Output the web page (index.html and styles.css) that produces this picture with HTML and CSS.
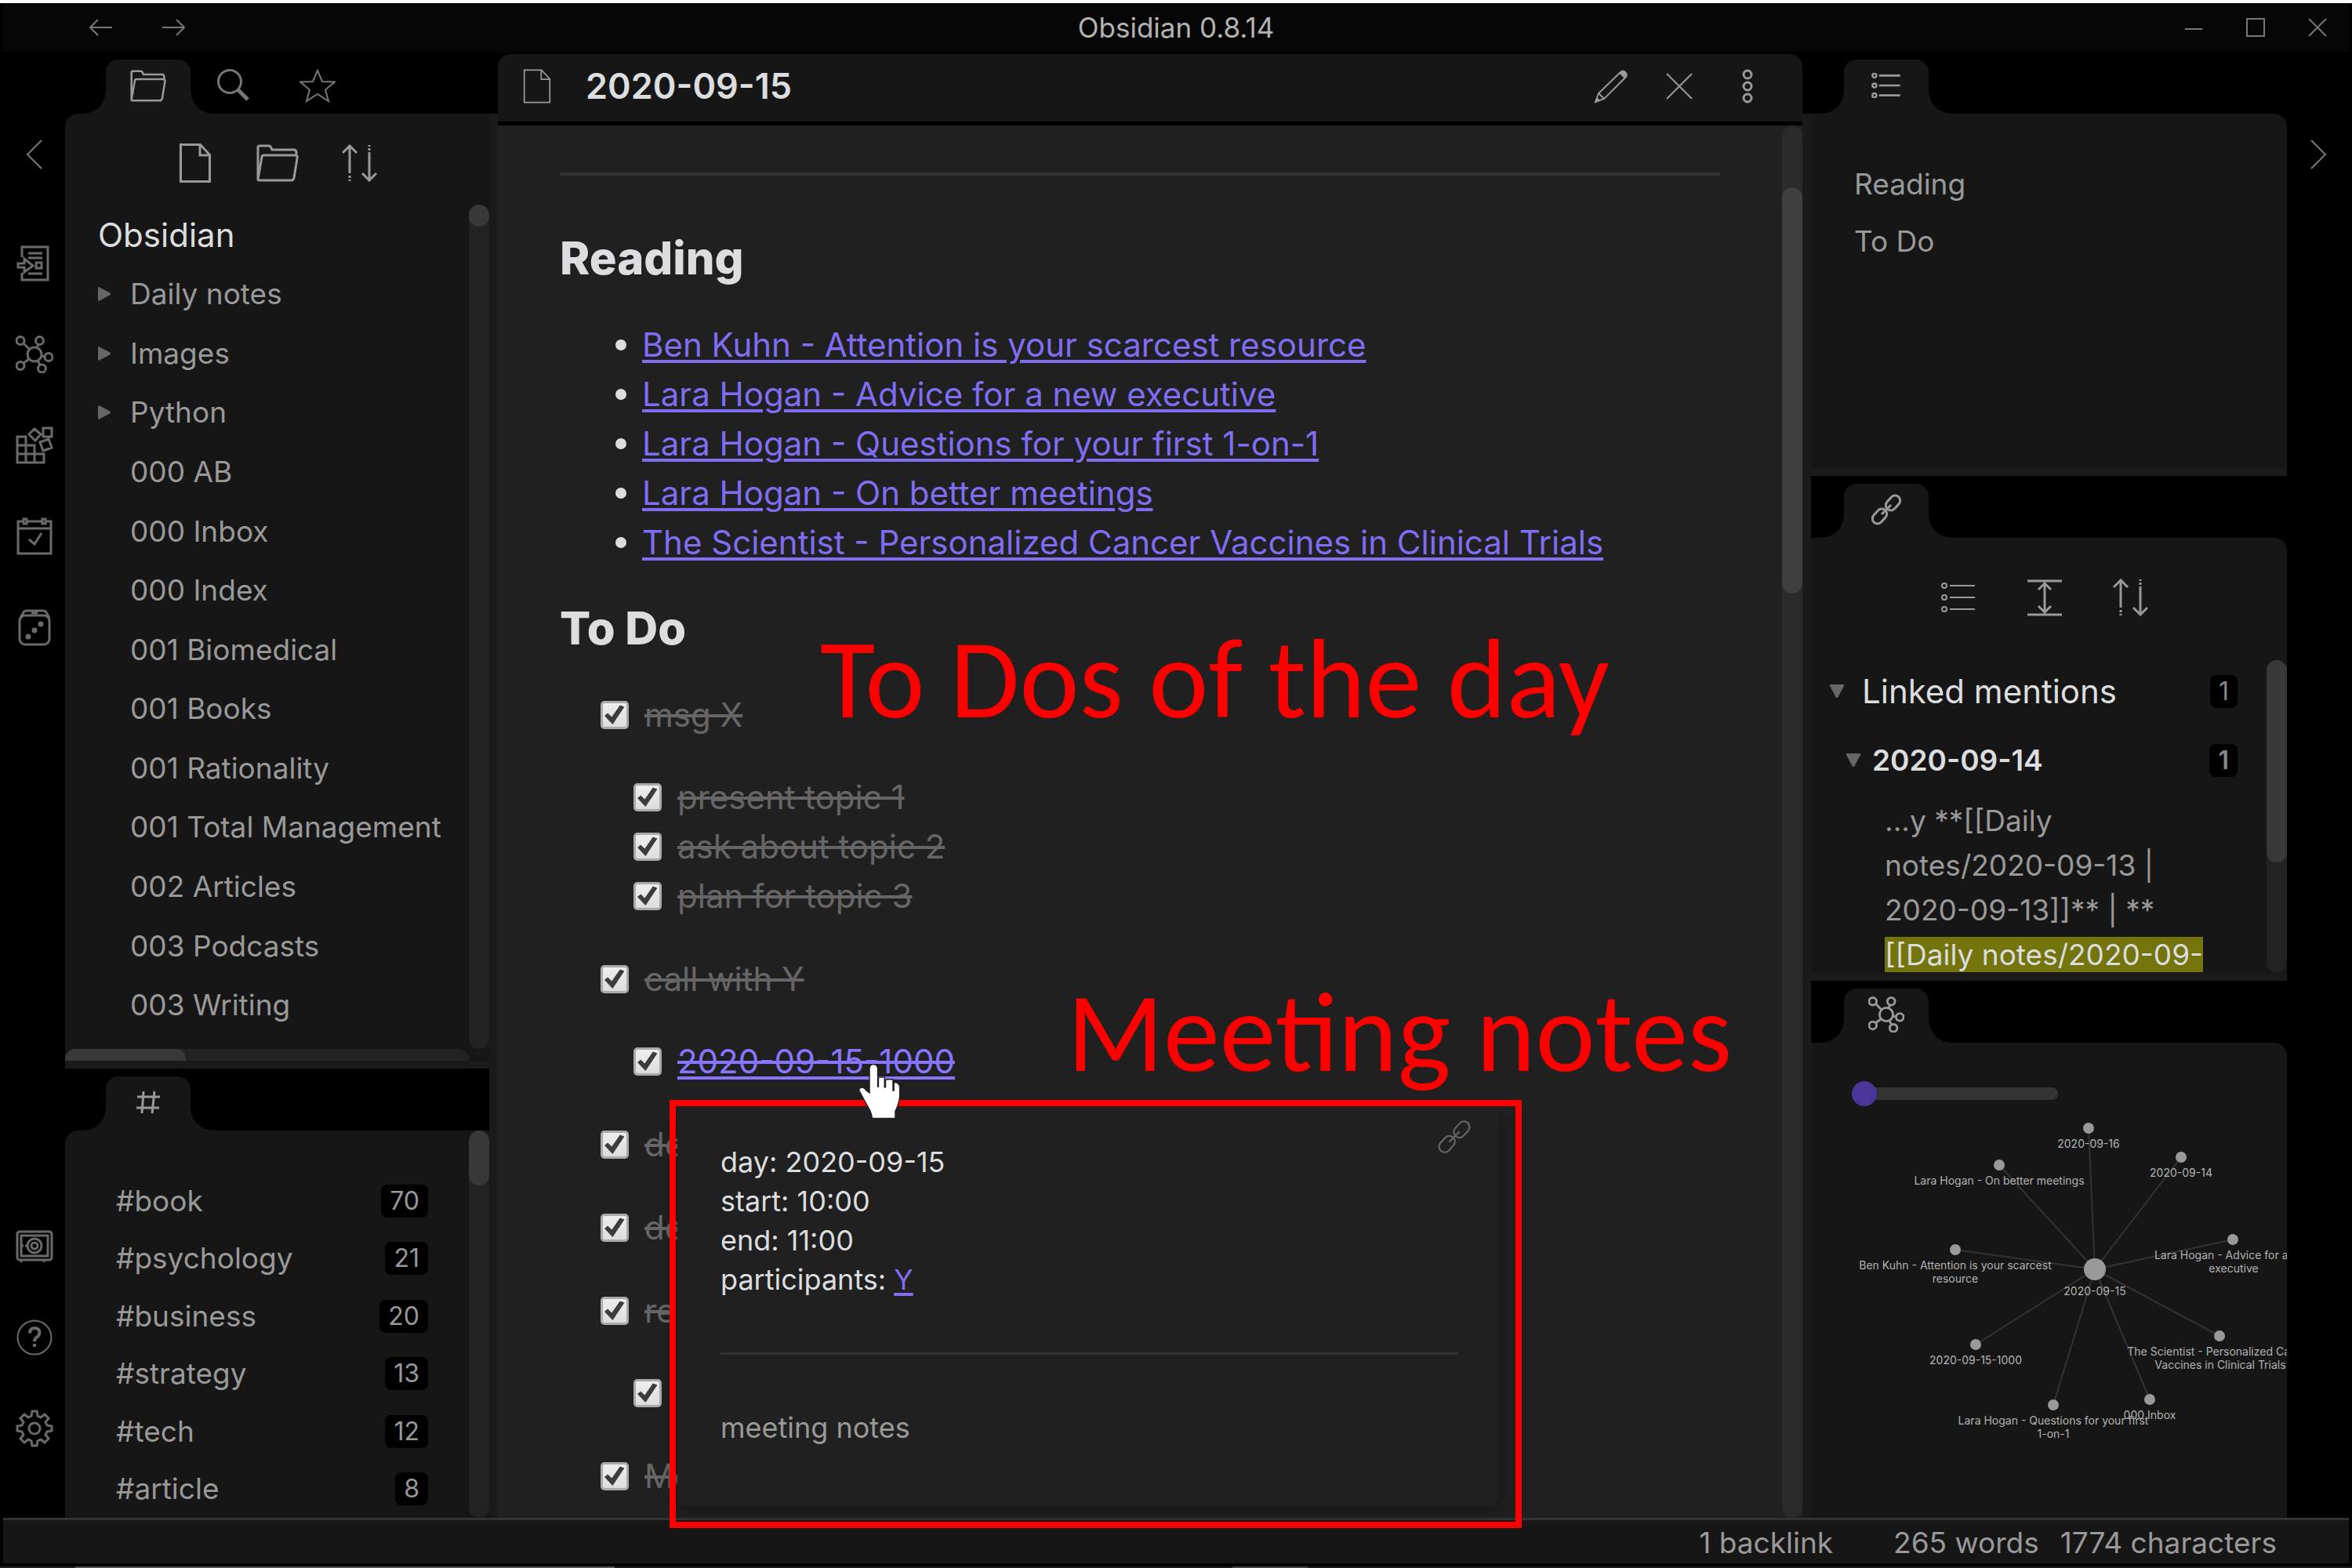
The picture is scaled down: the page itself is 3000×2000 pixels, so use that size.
FILE: index.html
```html
<!DOCTYPE html>
<html lang="en">
<head>
<meta charset="utf-8">
<title>Obsidian 0.8.14</title>
<link rel="stylesheet" href="styles.css">
</head>
<body>
<svg class="sprite" aria-hidden="true">
  <symbol id="i-folder" viewBox="0 0 54 48"><path d="M2 45V4q0-2 2-2h12q2 0 3 3l1 2h28q3 0 3 4v3M2 45l5-29q0-2 3-2h39q4 0 3 4l-4 25q-1 3-3 3H4q-2 0-2-1z"/></symbol>
  <symbol id="i-file" viewBox="0 0 40 50"><path d="M1.500 1.500h25l12 13v34h-37zM26 2v13h12"/></symbol>
  <symbol id="i-sort" viewBox="0 0 46 48"><path d="M10 2v35M1 11l9-9 9 9M35 10v36M26 37l9 9 9-9M10 40v3M10 45v2M35 1v2M35 5v3"/></symbol>
  <symbol id="i-list" viewBox="0 0 44 38"><circle cx="4" cy="4" r="3"/><circle cx="4" cy="19" r="3"/><circle cx="4" cy="34" r="3"/><path d="M11 4h32M11 19h32M11 34h32"/></symbol>
  <symbol id="i-graph" viewBox="0 0 48 48"><circle cx="24" cy="24" r="9"/><circle cx="6" cy="6.500" r="5"/><circle cx="30.500" cy="6.500" r="5"/><circle cx="42" cy="27.500" r="5"/><circle cx="33.500" cy="42" r="5"/><circle cx="6" cy="38.500" r="5"/><path d="M10 10l7.500 7.500M28.800 11.500L27 15.500M33 26l4 .7M28 32l3 5.500M10 35l7-5"/></symbol>
  <symbol id="i-link" viewBox="0 0 40 40"><rect x="-6.500" y="-10.500" width="13" height="21" rx="6.500" transform="translate(28.500 11.500) rotate(42)"/><rect x="-6.500" y="-10.500" width="13" height="21" rx="6.500" transform="translate(11.500 28.500) rotate(42)"/><path d="M14 26l12-12"/></symbol>
  <symbol id="i-tri" viewBox="0 0 18 20"><path d="M0 2q0-2 2-1l14 7.500q2 1.500 0 3L2 19q-2 1-2-1z"/></symbol>
</svg>

<div class="window">
  <header class="titlebar">
    <nav class="history">
      <button aria-label="Back"><svg class="s2" width="30" height="22" viewBox="0 0 30 22"><path d="M29 11H2M11 1L1 11l10 10"/></svg></button>
      <button aria-label="Forward"><svg class="s2" width="30" height="22" viewBox="0 0 30 22"><path d="M1 11h27M19 1l10 10-10 10"/></svg></button>
    </nav>
    <h1 class="app-title">Obsidian 0.8.14</h1>
    <div class="win-controls">
      <button aria-label="Minimize"><svg class="s2" width="24" height="24" viewBox="0 0 24 24"><path d="M1 14h22"/></svg></button>
      <button aria-label="Maximize"><svg class="s2" width="24" height="24" viewBox="0 0 24 24"><path d="M1 1h22v22H1z"/></svg></button>
      <button aria-label="Close"><svg class="s2" width="24" height="24" viewBox="0 0 24 24"><path d="M1 1l22 22M23 1L1 23"/></svg></button>
    </div>
  </header>

  <div class="workspace">
    <nav class="ribbon">
      <button class="collapse" aria-label="Collapse left"><svg class="s2" width="22" height="38" viewBox="0 0 22 38"><path d="M20 1L2 19l18 18"/></svg></button>
      <button aria-label="Open quick switcher"><svg class="s3" width="48" height="48" viewBox="0 0 48 48"><path d="M8 16V3h33v42H8V36M16 11h18M16 17h18M16 37h18M26 23h7v7h-7zM3 24h8v-6l11 9-11 8v-6H3z"/></svg></button>
      <button aria-label="Open graph view"><svg class="s3" width="48" height="48"><use href="#i-graph"/></svg></button>
      <button aria-label="Templates"><svg class="s3" width="48" height="48" viewBox="0 0 48 48"><path d="M2 13h11v33H2zM2 24h22v22M2 35h34v11H2M13 24v22M24 35v11M35 2h11v11H35zM24 3l8 7-7 8-8-8zM31 20l11-4 4 11-11 4z"/></svg></button>
      <button aria-label="Daily note"><svg class="s3" width="48" height="48" viewBox="0 0 48 48"><path d="M9 5H3v41h42V5h-6M15 5h18M3 14h42M10 2h4v6h-4zM34 2h4v6h-4zM17 28l7 6 9-14"/></svg></button>
      <button aria-label="Random note"><svg class="s3" width="48" height="48" viewBox="0 0 48 48"><rect x="5" y="9" width="38" height="37" rx="7"/><path d="M6 12l4-7q1-2 4-2h21q3 0 4 2l4 7M20 6h8"/><g class="solid"><circle cx="16" cy="36" r="3.500"/><circle cx="24" cy="28" r="3.500"/><circle cx="32" cy="20" r="3.500"/></g></svg></button>
      <span class="spacer"></span>
      <button aria-label="Open another vault"><svg class="s3" width="48" height="48" viewBox="0 0 48 48"><rect x="2" y="5" width="44" height="36" rx="3"/><path d="M7 10h34v26H7zM7 23h3M12 23h3M7 42v2M36 42v2"/><circle cx="24" cy="23" r="9"/><circle cx="24" cy="23" r="4"/></svg></button>
      <button aria-label="Help"><svg class="s2" width="48" height="48" viewBox="0 0 48 48"><circle cx="24" cy="24" r="21.500"/><path class="heavy" d="M18 18.500q0-6.500 6.200-6.500t6.200 6q0 3-3.200 5.300T24 29M24 32v4"/></svg></button>
      <button aria-label="Settings"><svg class="s3" width="48" height="48" viewBox="0 0 48 48"><circle cx="24" cy="24" r="7"/><path d="M21 2h6l1 6 4 2 5-4 5 5-4 5 2 4 6 1v6l-6 1-2 4 4 5-5 5-5-4-4 2-1 6h-6l-1-6-4-2-5 4-5-5 4-5-2-4-6-1v-6l6-1 2-4-4-5 5-5 5 4 4-2z"/></svg></button>
    </nav>

    <aside class="sidebar left">
      <section class="pane">
        <div class="tabs">
          <button class="tab active" aria-label="Files"><svg class="s3" width="46" height="41"><use href="#i-folder"/></svg></button>
          <button class="tab" aria-label="Search"><svg class="s3" width="42" height="42" viewBox="0 0 42 42"><circle cx="17" cy="16" r="14.500"/><path class="thick" d="M27 26l13 13"/></svg></button>
          <button class="tab" aria-label="Starred"><svg class="s2" width="46" height="44" viewBox="0 0 46 44"><path d="M23 3l6 14 16 .5-12 10L37 42l-14-9-14 9 4-14.500-12-10 16-.5z"/></svg></button>
        </div>
        <div class="panel rounded-left files">
          <div class="toolbar files-bar">
            <button aria-label="New note"><svg class="s3" width="40" height="50"><use href="#i-file"/></svg></button>
            <button aria-label="New folder"><svg class="s3" width="54" height="48"><use href="#i-folder"/></svg></button>
            <button aria-label="Change sort order"><svg class="s3" width="46" height="48"><use href="#i-sort"/></svg></button>
          </div>
          <div class="scroll-row">
            <ul class="tree">
              <li class="root">Obsidian</li>
              <li><svg class="tri" width="17" height="20"><use href="#i-tri"/></svg>Daily notes</li>
              <li><svg class="tri" width="17" height="20"><use href="#i-tri"/></svg>Images</li>
              <li><svg class="tri" width="17" height="20"><use href="#i-tri"/></svg>Python</li>
              <li class="leaf">000 AB</li>
              <li class="leaf">000 Inbox</li>
              <li class="leaf">000 Index</li>
              <li class="leaf">001 Biomedical</li>
              <li class="leaf">001 Books</li>
              <li class="leaf">001 Rationality</li>
              <li class="leaf">001 Total Management</li>
              <li class="leaf">002 Articles</li>
              <li class="leaf">003 Podcasts</li>
              <li class="leaf">003 Writing</li>
            </ul>
            <div class="vbar"><div class="thumb files-thumb"></div></div>
          </div>
          <div class="hbar"><div class="hthumb"></div></div>
        </div>
      </section>
      <div class="divider"></div>
      <section class="pane">
        <div class="tabs">
          <button class="tab active" aria-label="Tags"><svg class="s3" width="32" height="30" viewBox="0 0 32 30"><path d="M2 8h29M1 22h29M10 1L8 29M24 1l-3 28"/></svg></button>
        </div>
        <div class="panel rounded-left scroll-row">
          <ul class="tags">
            <li>#book<span class="badge">70</span></li>
            <li>#psychology<span class="badge">21</span></li>
            <li>#business<span class="badge">20</span></li>
            <li>#strategy<span class="badge">13</span></li>
            <li>#tech<span class="badge">12</span></li>
            <li>#article<span class="badge">8</span></li>
          </ul>
          <div class="vbar"><div class="thumb tags-thumb"></div></div>
        </div>
      </section>
    </aside>

    <div class="handle"></div>

    <main class="note">
      <header class="note-header">
        <svg class="s2 doc" width="36" height="44"><use href="#i-file"/></svg>
        <h2 class="note-title">2020-09-15</h2>
        <button aria-label="Edit"><svg class="s2" width="44" height="44" viewBox="0 0 44 44"><path d="M2 42l4-11L34 4q3-3 6 0t1 6L13 38zM6 31l7 7"/><path class="solid" d="M2 42l2-6 4 4zM34 4q3-3 6 0t1 6l-2 2-7-7z"/></svg></button>
        <button aria-label="Close pane"><svg class="s2" width="34" height="34" viewBox="0 0 34 34"><path d="M1 1l32 32M33 1L1 33"/></svg></button>
        <button aria-label="More options"><svg class="s3" width="16" height="44" viewBox="0 0 16 44"><circle cx="8" cy="7" r="5"/><circle cx="8" cy="22" r="5"/><circle cx="8" cy="37" r="5"/></svg></button>
      </header>
      <div class="scroll-row note-body">
        <article class="preview">
          <hr>
          <h3>Reading</h3>
          <ul class="links">
            <li><a href="#ben-kuhn">Ben Kuhn - Attention is your scarcest resource</a></li>
            <li><a href="#advice">Lara Hogan - Advice for a new executive</a></li>
            <li><a href="#questions">Lara Hogan - Questions for your first 1-on-1</a></li>
            <li><a href="#meetings">Lara Hogan - On better meetings</a></li>
            <li><a href="#scientist">The Scientist - Personalized Cancer Vaccines in Clinical Trials</a></li>
          </ul>
          <h3>To Do</h3>
          <ul class="todo">
            <li><label><input type="checkbox" checked><s>msg X</s></label>
              <ul>
                <li><label><input type="checkbox" checked><s>present topic 1</s></label></li>
                <li><label><input type="checkbox" checked><s>ask about topic 2</s></label></li>
                <li><label><input type="checkbox" checked><s>plan for topic 3</s></label></li>
              </ul>
            </li>
            <li><label><input type="checkbox" checked><s>call with Y</s></label>
              <ul>
                <li><label><input type="checkbox" checked><s class="hot"><a href="#2020-09-15-1000">2020-09-15-1000</a></s></label></li>
              </ul>
            </li>
            <li><label><input type="checkbox" checked><s>de</s></label></li>
            <li><label><input type="checkbox" checked><s>de</s></label></li>
            <li><label><input type="checkbox" checked><s>re</s></label>
              <ul>
                <li><label><input type="checkbox" checked aria-label="Subtask"></label></li>
              </ul>
            </li>
            <li><label><input type="checkbox" checked><s>Me</s></label></li>
          </ul>
        </article>
        <div class="vbar wide"><div class="thumb note-thumb"></div></div>
      </div>

      <div class="popover">
        <svg class="s2 pop-link" width="44" height="44"><use href="#i-link"/></svg>
        <p>day: 2020-09-15<br>start: 10:00<br>end: 11:00<br>participants: <a href="#y">Y</a></p>
        <hr>
        <p class="muted">meeting notes</p>
      </div>
      <div class="frame"></div>
      <p class="callout first">To Dos of the day</p>
      <p class="callout second">Meeting notes</p>
      <svg class="cursor" width="57" height="72" viewBox="100 45 170 215"><path d="M150 165V70q0-15 13-15q13 0 14 15V140H184V108q0-4 4-4H203V142h8V115q0-3 4-3H235V155h8V125q0-3 6-1q10 3 12 14V175q-3 30-17 55V256H160Q157 240 152 228Q130 190 112 155Q108 147 114 144Q125 140 135 155Z"/></svg>
    </main>

    <div class="handle"></div>

    <aside class="sidebar right">
      <section class="pane">
        <div class="tabs">
          <button class="tab active" aria-label="Outline"><svg class="s3" width="38" height="32"><use href="#i-list"/></svg></button>
        </div>
        <div class="panel rounded-right">
          <ul class="outline">
            <li>Reading</li>
            <li>To Do</li>
          </ul>
        </div>
      </section>
      <div class="divider"></div>
      <section class="pane">
        <div class="tabs">
          <button class="tab active" aria-label="Backlinks"><svg class="s3" width="40" height="40"><use href="#i-link"/></svg></button>
        </div>
        <div class="panel rounded-right backlinks">
          <div class="toolbar back-bar">
            <button aria-label="Collapse results"><svg class="s2" width="44" height="38"><use href="#i-list"/></svg></button>
            <button aria-label="Show more context"><svg class="s3" width="46" height="48" viewBox="0 0 46 48"><path d="M1 3h44M1 46h44M23 6v37M15 14l8-8 8 8M15 35l8 8 8-8"/></svg></button>
            <button aria-label="Change sort order"><svg class="s3" width="46" height="48"><use href="#i-sort"/></svg></button>
          </div>
          <div class="scroll-row">
            <div class="results">
              <div class="result-head"><svg class="tri down" width="18" height="20"><use href="#i-tri"/></svg>Linked mentions<span class="badge">1</span></div>
              <div class="result-file"><svg class="tri down" width="18" height="20"><use href="#i-tri"/></svg>2020-09-14<span class="badge">1</span></div>
              <p class="match">...y **[[Daily<br>notes/2020-09-13 |<br>2020-09-13]]** | **<br><mark>[[Daily notes/2020-09-</mark></p>
            </div>
            <div class="vbar"><div class="thumb back-thumb"></div></div>
          </div>
        </div>
      </section>
      <div class="divider"></div>
      <section class="pane">
        <div class="tabs">
          <button class="tab active" aria-label="Local graph"><svg class="s3" width="46" height="46"><use href="#i-graph"/></svg></button>
        </div>
        <div class="panel rounded-right graph">
          <input class="depth" type="range" min="1" max="5" value="1" aria-label="Depth">
          <svg class="map" width="607" height="480" viewBox="2310 1420 607 480">
            <g class="edges"><path d="M2672 1619L2664 1439M2672 1619L2782 1476M2672 1619L2550 1486M2672 1619L2494 1594M2672 1619L2848 1581M2672 1619L2520 1715M2672 1619L2831 1704M2672 1619L2742 1785M2672 1619L2619 1792"/></g>
            <g class="nodes"><circle cx="2672" cy="1619" r="14"/><circle cx="2664" cy="1439" r="7"/><circle cx="2782" cy="1476" r="7"/><circle cx="2550" cy="1486" r="7"/><circle cx="2494" cy="1594" r="7"/><circle cx="2848" cy="1581" r="7"/><circle cx="2520" cy="1715" r="7"/><circle cx="2831" cy="1704" r="7"/><circle cx="2742" cy="1785" r="7"/><circle cx="2619" cy="1792" r="7"/></g>
            <g class="labels">
              <text x="2672" y="1652">2020-09-15</text>
              <text x="2664" y="1464">2020-09-16</text>
              <text x="2782" y="1501">2020-09-14</text>
              <text x="2550" y="1511">Lara Hogan - On better meetings</text>
              <text x="2494" y="1619">Ben Kuhn - Attention is your scarcest</text>
              <text x="2494" y="1636">resource</text>
              <text x="2849" y="1606">Lara Hogan - Advice for a new</text>
              <text x="2849" y="1623">executive</text>
              <text x="2520" y="1740">2020-09-15-1000</text>
              <text x="2832" y="1729">The Scientist - Personalized Cancer</text>
              <text x="2832" y="1746">Vaccines in Clinical Trials</text>
              <text x="2742" y="1810">000 Inbox</text>
              <text x="2619" y="1817">Lara Hogan - Questions for your first</text>
              <text x="2619" y="1834">1-on-1</text>
            </g>
          </svg>
        </div>
      </section>
    </aside>

    <nav class="ribbon">
      <button class="collapse" aria-label="Collapse right"><svg class="s2" width="22" height="38" viewBox="0 0 22 38"><path d="M2 1l18 18L2 37"/></svg></button>
    </nav>
  </div>

  <footer class="status">
    <span class="backlink-count">1 backlink</span>
    <span>265 words</span>
    <span>1774 characters</span>
  </footer>
  <div class="edge"></div>
</div>
</body>
</html>
```
FILE: styles.css
```css
* { box-sizing: border-box; }

body {
  margin: 0;
  background: #000;
  color: #999;
  font: 37px/50px Inter, "Liberation Sans", sans-serif;
}

ul, p, h1, h2, h3, hr { margin: 0; padding: 0; border: 0; }
ul { list-style: none; }
button { display: flex; align-items: center; justify-content: center; margin: 0; padding: 0; border: 0; background: none; color: inherit; }
svg { display: block; fill: none; stroke: currentColor; flex: none; }
.sprite { position: absolute; width: 0; height: 0; }
.s2 { stroke-width: 2; }
.s3 { stroke-width: 3; }
.solid { fill: currentColor; stroke: none; }
.heavy { stroke-width: 4; }
.thick { stroke-width: 5; }
.tri { fill: #666; stroke: none; }
.down { transform: rotate(90deg); }
a { color: #7f6df2; text-decoration-thickness: 4px; text-underline-offset: 4px; }

.window { display: flex; flex-direction: column; height: 100vh; overflow: hidden; border-top: 4px solid #fff; }

/* title bar */
.titlebar { display: grid; grid-template-columns: 1fr auto 1fr; align-items: center; flex: none; height: 62px; margin: 0 4px; background: #060606; color: #777; }
.history { display: flex; gap: 62px; padding-left: 110px; }
.app-title { color: #b3b3b3; font-size: 35px; font-weight: 400; line-height: 44px; }
.win-controls { display: flex; justify-content: flex-end; gap: 55px; padding-right: 28px; }

/* layout */
.workspace { display: grid; grid-template-columns: 79px 541px 11px minmax(0, 1fr) 11px 607px 79px; flex: 1; min-height: 0; margin: 0 4px; }
.handle { margin-top: 79px; background: #1a1a1a; }
.sidebar { display: grid; min-height: 0; }
.left { grid-template-rows: minmax(0, 1287fr) 10px minmax(0, 573fr); }
.right { grid-template-rows: minmax(0, 530fr) 11px minmax(0, 633fr) 11px minmax(0, 685fr); }
.divider { background: #1a1a1a; }
.pane { display: flex; flex-direction: column; min-height: 0; }

/* ribbons */
.ribbon { display: flex; flex-direction: column; align-items: center; gap: 68px; padding: 112px 0 90px; color: #6a6a6a; }
.collapse { margin-bottom: 28px; color: #777; }
.spacer { flex: 1; }

/* tabs */
.tabs { display: flex; align-items: flex-end; flex: none; height: 79px; padding-left: 52px; color: #777; }
.right .tabs { padding-left: 42px; }
.tab { position: relative; width: 108px; height: 69px; padding-bottom: 3px; }
.active { border-radius: 16px 16px 0 0; background: #161616; color: #999; }
.active::before, .active::after { content: ""; position: absolute; bottom: 0; width: 28px; height: 28px; }
.active::before { right: 100%; background: radial-gradient(circle at 0 0, transparent 27px, #161616 28px); }
.active::after { left: 100%; background: radial-gradient(circle at 100% 0, transparent 27px, #161616 28px); }

.panel { flex: 1; min-height: 0; overflow: hidden; background: #161616; }
.rounded-left { border-top-left-radius: 16px; }
.rounded-right { border-top-right-radius: 16px; }
.scroll-row { display: flex; flex: 1; min-height: 0; }
.vbar { flex: none; width: 26px; border-radius: 13px; background: #222; }
.thumb { border-radius: 13px; background: #383838; }
.toolbar { display: flex; flex: none; justify-content: center; align-items: center; }
.toolbar button { width: 46px; }

/* file explorer */
.files, .backlinks { display: flex; flex-direction: column; }
.files-bar { gap: 59px; height: 116px; padding: 10px 0 0; }
.tree { display: grid; grid-auto-rows: minmax(0, 1fr); flex: 1; padding: 1px 0 18px 42px; }
.tree li { display: flex; align-items: center; gap: 24px; white-space: nowrap; }
.tree .root { color: #dcddde; font-size: 42px; }
.tree .leaf { padding-left: 41px; }
.files-thumb { height: 28px; }
.hbar { flex: none; width: 515px; height: 15px; border-radius: 13px 13px 0 0; background: #222; }
.hthumb { width: 154px; height: 15px; border-radius: 13px 13px 0 0; background: #383838; }

/* tags */
.tags { display: grid; grid-auto-rows: minmax(0, 1fr); flex: 1; padding: 53px 52px 0 65px; }
.tags li { display: flex; align-items: center; justify-content: space-between; }
.badge { padding: 0 11px; border-radius: 8px; background: #000; font-size: 32px; line-height: 42px; }
.tags-thumb { height: 70px; }

/* note */
.note { position: relative; display: flex; flex-direction: column; min-height: 0; padding-top: 3px; }
.note-header { display: flex; align-items: center; flex: none; height: 91px; padding: 0 62px 5px 32px; border-bottom: 5px solid #000; border-radius: 16px 16px 0 0; background: #161616; }
.note-header button + button { margin-left: 48px; }
.note-header button:last-child { margin-left: 62px; }
.note-title { flex: 1; padding-left: 44px; color: #dcddde; font-size: 45px; font-weight: 600; }
.note-body { background: #202020; }
.preview { flex: 1; min-width: 0; overflow: hidden; padding: 60px 79px 0; color: #dcddde; font-size: 42px; line-height: 63px; }
.preview hr { height: 4px; background: #333; }
.preview h3 { margin-bottom: 44px; font-size: 58px; font-weight: 800; line-height: 70px; }
.preview hr + h3 { margin-top: 70px; }
.links { margin-bottom: 43px; padding-left: 71px; }
.links li { display: flex; align-items: center; gap: 20px; }
.links li::before { content: ""; width: 14px; height: 14px; border-radius: 50%; background: #dcddde; }
.todo { display: flex; flex-direction: column; gap: 43px; padding-left: 52px; color: #666; }
.todo ul { margin-top: 42px; padding-left: 42px; }
.todo label { display: flex; align-items: center; gap: 20px; height: 63px; }
.todo s { text-decoration-thickness: 4px; }
.todo .hot, .hot a { color: #8875ff; }
.todo input {
  appearance: none;
  width: 36px;
  height: 36px;
  margin: 0;
  border: 3px solid #aaa;
  border-radius: 5px;
  background: linear-gradient(#eee, #ddd);
}
.todo input::before { content: ""; display: block; width: 26px; height: 26px; margin: 2px; background: #3c3c3c; clip-path: polygon(0 56%, 16% 42%, 36% 62%, 76% 4%, 98% 12%, 40% 98%); }
.wide { background: #2a2a2a; }
.note-thumb { height: 518px; margin-top: 79px; background: #3f3f3f; }

/* hover preview and annotations */
.popover { position: absolute; left: 229px; top: 1347px; width: 1048px; height: 508px; padding: 44px 52px 0 55px; border-radius: 12px; background: #202020; box-shadow: 0 8px 24px rgba(0, 0, 0, .3); color: #dcddde; font-size: 36px; line-height: 50px; }
.popover hr { height: 3px; margin: 68px 0; background: #333; }
.popover .muted { color: #999; }
.pop-link { position: absolute; top: 15px; right: 35px; color: #666; }
.frame { position: absolute; left: 219px; top: 1337px; width: 1087px; height: 546px; border: 8px solid #f00; }
.callout { position: absolute; color: #f00; font: 144px/144px Carlito, Lato, sans-serif; white-space: nowrap; }
.first { left: 411px; top: 728px; }
.second { left: 726px; top: 1179px; }
.cursor { position: absolute; left: 458px; top: 1289px; fill: #fff; stroke: #202020; stroke-width: 8px; paint-order: stroke; }

/* outline */
.outline { padding: 53px 0 0 55px; }
.outline li { line-height: 73px; }

/* backlinks */
.back-bar { gap: 64px; height: 156px; padding: 0 11px 4px 0; }
.results { flex: 1; min-width: 0; overflow: hidden; }
.result-head, .result-file { display: flex; align-items: center; padding-right: 37px; color: #dcddde; }
.result-head { gap: 23px; height: 80px; padding-left: 24px; font-size: 42px; }
.result-file { gap: 15px; height: 96px; padding-left: 45px; font-weight: 600; }
.results .badge { margin-left: auto; color: #888; }
.match { padding-left: 94px; line-height: 57px; white-space: nowrap; }
mark { background: #74740d; color: #dcddde; }
.back-thumb { height: 258px; }

/* local graph */
.graph { display: flex; flex-direction: column; align-items: flex-start; }
.depth { appearance: none; width: 263px; height: 32px; margin: 49px 0 9px 52px; background: none; }
.depth::-webkit-slider-runnable-track { height: 16px; border-radius: 8px; background: #333; }
.depth::-webkit-slider-thumb { appearance: none; width: 32px; height: 32px; margin-top: -8px; border-radius: 50%; background: #483699; }
.edges { stroke: #333; stroke-width: 2; }
.nodes { fill: #999; stroke: none; }
.labels { fill: #b3b3b3; stroke: none; font-size: 14px; text-anchor: middle; }

/* status bar */
.status { display: flex; align-items: center; justify-content: flex-end; flex: none; gap: 27px; height: 58px; margin: 0 4px; padding: 2px 92px 0 0; border-top: 3px solid #333; background: #161616; }
.backlink-count { margin-right: 50px; }
.edge { flex: none; height: 6px; border-top: 4px solid #000; background: linear-gradient(90deg, #222 96px, #555 96px 784px, #1a1a1a 784px 1572px, #444 1572px 1668px, #1a1a1a 1668px); }
```
